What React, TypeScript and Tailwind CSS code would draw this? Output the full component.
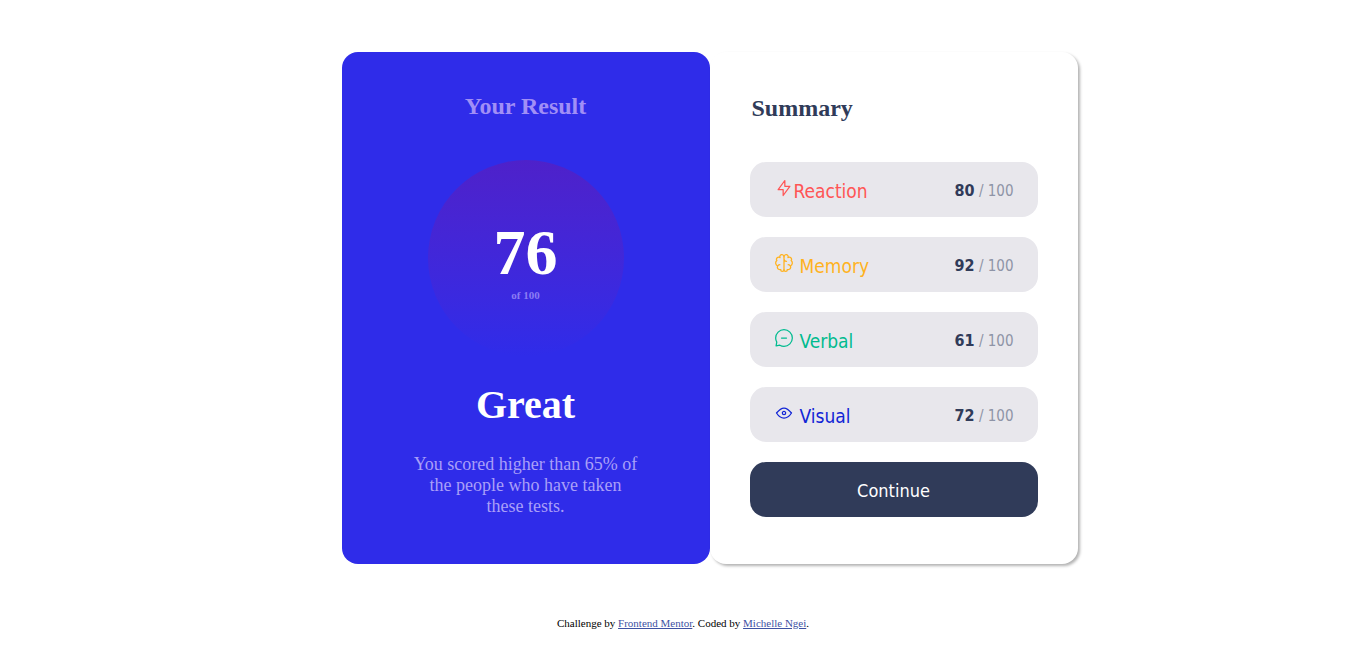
import type { ReactNode } from "react";

type Category = {
  name: string;
  score: number;
  color: string;
  gap: string;
  icon: ReactNode;
};

const categories: Category[] = [
  {
    name: "Reaction",
    score: 80,
    color: "text-[#ff5555]",
    gap: "gap-0",
    icon: <path d="M10.833 8.333V2.5l-6.666 9.167h5V17.5l6.666-9.167h-5Z" />,
  },
  {
    name: "Memory",
    score: 92,
    color: "text-[#ffb21e]",
    gap: "gap-1.5",
    icon: (
      <>
        <path d="M5.833 11.667a2.5 2.5 0 1 0 .834 4.858" />
        <path d="M3.553 13.004a3.333 3.333 0 0 1-.728-5.53m.025-.067a2.083 2.083 0 0 1 2.983-2.824m.199.054A2.083 2.083 0 1 1 10 3.75v12.917a1.667 1.667 0 0 1-3.333 0M10 5.833a2.5 2.5 0 0 0 2.5 2.5m1.667 3.334a2.5 2.5 0 1 1-.834 4.858" />
        <path d="M16.447 13.004a3.334 3.334 0 0 0 .728-5.53m-.025-.067a2.083 2.083 0 0 0-2.983-2.824M10 3.75a2.085 2.085 0 0 1 2.538-2.033 2.084 2.084 0 0 1 1.43 2.92m-.635 12.03a1.667 1.667 0 0 1-3.333 0" />
      </>
    ),
  },
  {
    name: "Verbal",
    score: 61,
    color: "text-[#00bb8f]",
    gap: "gap-1.5",
    icon: (
      <path d="M7.5 10h5M10 18.333A8.333 8.333 0 1 0 1.667 10c0 1.518.406 2.942 1.115 4.167l-.699 3.75 3.75-.699A8.295 8.295 0 0 0 10 18.333Z" />
    ),
  },
  {
    name: "Visual",
    score: 72,
    color: "text-[#1125d6]",
    gap: "gap-1.5",
    icon: (
      <>
        <path d="M10 11.667a1.667 1.667 0 1 0 0-3.334 1.667 1.667 0 0 0 0 3.334Z" />
        <path d="M17.5 10c-1.574 2.492-4.402 5-7.5 5s-5.926-2.508-7.5-5C4.416 7.632 6.66 5 10 5s5.584 2.632 7.5 5Z" />
      </>
    ),
  },
];

function ScoreRow({ name, score, color, gap, icon }: Category) {
  return (
    <li className="flex h-[55px] items-center justify-between rounded-2xl bg-[#e8e7ec] px-6 pt-0.5">
      <span className={`flex items-center ${gap} ${color}`}>
        <svg
          viewBox="0 0 20 20"
          className="mb-1.5 size-5"
          fill="none"
          stroke="currentColor"
          strokeWidth="1.25"
          strokeLinecap="round"
          strokeLinejoin="round"
          aria-hidden="true"
        >
          {icon}
        </svg>
        <span className="text-[19px] leading-7">{name}</span>
      </span>
      <span className="text-[15px] leading-6 text-[#8e94a6]">
        <strong className="text-base font-bold text-[#303b59]">{score}</strong> / 100
      </span>
    </li>
  );
}

export default function App() {
  return (
    <div className="bg-white pt-[52px] font-['Liberation_Serif',serif]">
      <main className="ml-[25%] grid max-w-[736px] grid-cols-2">
        <section className="flex flex-col items-center rounded-2xl bg-[#2f2ce9] px-[70px] pt-10 text-center">
          <h2 className="text-2xl leading-7 font-bold text-[#a18ff6]">Your Result</h2>
          <div className="mt-10 flex size-[196px] flex-col items-center justify-center rounded-full bg-linear-to-b from-[#4e21ca] to-[#2f2ce9]">
            <p className="pt-0.5 text-[64px] leading-[72px] font-bold text-white">76</p>
            <p className="text-[11px] leading-3 font-bold text-[#8b7cf4]">of 100</p>
          </div>
          <h1 className="mt-[25px] text-[40px] leading-12 font-bold text-white">Great</h1>
          <p className="mt-[25px] text-lg leading-[21px] text-[#a99ff8]">
            You scored higher than 65% of the people who have taken these tests.
          </p>
        </section>
        <section className="rounded-2xl bg-white px-10 pt-[42px] pb-[47px] shadow-[2px_2px_3px_rgba(0,0,0,0.3)]">
          <h2 className="pl-0.5 text-2xl leading-7 font-bold text-[#303b59]">Summary</h2>
          <div className="mt-10 font-['DejaVu_Sans_Condensed','DejaVu_Sans',sans-serif]">
            <ul className="flex flex-col gap-5">
              {categories.map((category) => (
                <ScoreRow key={category.name} {...category} />
              ))}
            </ul>
            <button
              type="button"
              className="mt-5 h-[55px] w-full rounded-2xl bg-[#303b59] pt-0.5 text-lg text-white"
            >
              Continue
            </button>
          </div>
        </section>
      </main>
      <footer className="mt-[53px] text-center text-[11px] leading-3 text-black">
        Challenge by{" "}
        <a href="#frontend-mentor" className="text-[#3e52a3] underline">
          Frontend Mentor
        </a>
        . Coded by{" "}
        <a href="#author" className="text-[#3e52a3] underline">
          Michelle Ngei
        </a>
        .
      </footer>
    </div>
  );
}
